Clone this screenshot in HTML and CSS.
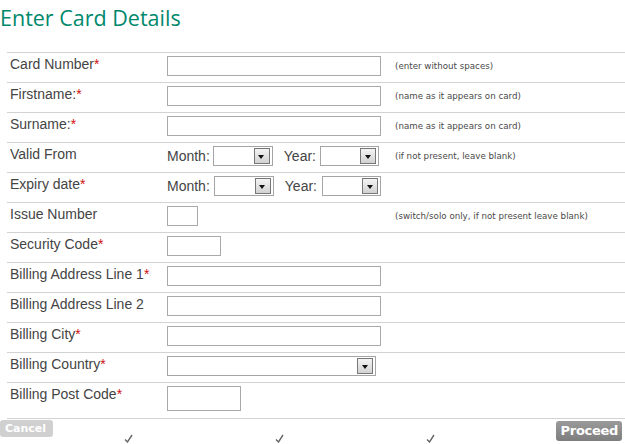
FILE: index.html
```html
<!DOCTYPE html>
<html>
<head>
<meta charset="utf-8">
<link rel="stylesheet" href="styles.css">
</head>
<body>
<h1 class="title">Enter Card Details</h1>
<table class="form">
  <tr>
    <td class="lbl">Card Number<span class="req">*</span></td>
    <td class="fld"><span class="inp w-long"></span></td>
    <td class="hint">(enter without spaces)</td>
  </tr>
  <tr>
    <td class="lbl">Firstname:<span class="req">*</span></td>
    <td class="fld"><span class="inp w-long"></span></td>
    <td class="hint">(name as it appears on card)</td>
  </tr>
  <tr>
    <td class="lbl">Surname:<span class="req">*</span></td>
    <td class="fld"><span class="inp w-long"></span></td>
    <td class="hint">(name as it appears on card)</td>
  </tr>
  <tr>
    <td class="lbl">Valid From</td>
    <td class="fld">
      <div class="dates">
        <span class="dl">Month:</span><span class="sel s-m"><span class="arr"></span></span>
        <span class="dl yr">Year:</span><span class="sel s-y"><span class="arr"></span></span>
      </div>
    </td>
    <td class="hint">(if not present, leave blank)</td>
  </tr>
  <tr>
    <td class="lbl">Expiry date<span class="req">*</span></td>
    <td class="fld">
      <div class="dates">
        <span class="dl">Month:</span><span class="sel s-m2"><span class="arr"></span></span>
        <span class="dl yr2">Year:</span><span class="sel s-y"><span class="arr"></span></span>
      </div>
    </td>
    <td class="hint"></td>
  </tr>
  <tr>
    <td class="lbl">Issue Number</td>
    <td class="fld"><span class="inp w-issue"></span></td>
    <td class="hint">(switch/solo only, if not present leave blank)</td>
  </tr>
  <tr>
    <td class="lbl">Security Code<span class="req">*</span></td>
    <td class="fld"><span class="inp w-sec"></span></td>
    <td class="hint"></td>
  </tr>
  <tr>
    <td class="lbl">Billing Address Line 1<span class="req">*</span></td>
    <td class="fld"><span class="inp w-long"></span></td>
    <td class="hint"></td>
  </tr>
  <tr>
    <td class="lbl">Billing Address Line 2</td>
    <td class="fld"><span class="inp w-long"></span></td>
    <td class="hint"></td>
  </tr>
  <tr>
    <td class="lbl">Billing City<span class="req">*</span></td>
    <td class="fld"><span class="inp w-long"></span></td>
    <td class="hint"></td>
  </tr>
  <tr>
    <td class="lbl">Billing Country<span class="req">*</span></td>
    <td class="fld"><span class="sel s-country"><span class="arr"></span></span></td>
    <td class="hint"></td>
  </tr>
  <tr class="last">
    <td class="lbl">Billing Post Code<span class="req">*</span></td>
    <td class="fld"><span class="inp w-post"></span></td>
    <td class="hint"></td>
  </tr>
</table>
<div class="footer">
  <span class="btn cancel">Cancel</span>
  <span class="btn proceed">Proceed</span>
</div>
<div class="ticks">
  <svg class="tick" width="9" height="9" viewBox="0 0 9 9"><path d="M1 5.5 L3.5 8 L8 1" fill="none" stroke="#666" stroke-width="1.4"/></svg>
  <svg class="tick" width="9" height="9" viewBox="0 0 9 9"><path d="M1 5.5 L3.5 8 L8 1" fill="none" stroke="#666" stroke-width="1.4"/></svg>
  <svg class="tick" width="9" height="9" viewBox="0 0 9 9"><path d="M1 5.5 L3.5 8 L8 1" fill="none" stroke="#666" stroke-width="1.4"/></svg>
</div>
</body>
</html>
```

FILE: styles.css
```css
html, body {
  margin: 0;
  padding: 0;
  background: #fff;
  overflow: hidden;
}
body {
  font-family: "Liberation Sans", Arial, sans-serif;
  color: #444;
  width: 625px;
  height: 444px;
}
.title {
  margin: 0;
  padding: 4px 0 0 0;
  height: 52px;
  box-sizing: border-box;
  font-family: "Open Sans", "DejaVu Sans", sans-serif;
  font-weight: normal;
  font-size: 21.5px;
  line-height: 28px;
  color: #00886c;
  white-space: nowrap;
}
.form {
  margin-left: 7px;
  width: 640px;
  border-collapse: collapse;
  table-layout: fixed;
}
.form tr {
  height: 30px;
}
.form tr.last {
  height: 36px;
}
.form td {
  border-top: 1px solid #d2d2d2;
  padding: 0;
  vertical-align: top;
  box-sizing: border-box;
}
.form tr.last td {
  border-bottom: 1px solid #d2d2d2;
}
.lbl {
  width: 160px;
  padding-left: 3px !important;
  padding-top: 3px !important;
  font-size: 14px;
  line-height: 17px;
  white-space: nowrap;
}
.req {
  color: #d01010;
}
.fld {
  width: 228px;
  padding-top: 3px !important;
}
.hint {
  font-family: "DejaVu Sans", Verdana, sans-serif;
  font-size: 8.7px;
  line-height: 10px;
  padding-top: 8px !important;
  white-space: nowrap;
  color: #4a4a4a;
}
.inp {
  display: block;
  height: 20px;
  border: 1px solid #a9a9a9;
  box-sizing: border-box;
  background: #fff;
}
.w-long { width: 214px; }
.w-issue { width: 31px; }
.w-sec { width: 54px; }
.w-post { width: 74px; height: 25px; }
.dates {
  display: flex;
  align-items: center;
  height: 20px;
}
.dl {
  font-size: 14px;
  line-height: 17px;
  margin-right: 3px;
}
.dl.yr {
  margin-left: 11px;
  margin-right: 4px;
}
.dl.yr2 {
  margin-left: 11px;
  margin-right: 5px;
}
.sel {
  display: flex;
  justify-content: flex-end;
  align-items: center;
  height: 20px;
  box-sizing: border-box;
  border: 1px solid #a5a5a5;
  padding-right: 2px;
  background: #fff;
}
.s-m { width: 60px; }
.s-m2 { width: 60px; margin-left: 1px; }
.s-y { width: 59px; }
.s-country { width: 209px; }
.arr {
  position: relative;
  width: 16px;
  height: 16px;
  box-sizing: border-box;
  border: 1px solid #777;
  background: linear-gradient(#f4f4f4, #d2d2d2);
}
.arr::after {
  content: "";
  position: absolute;
  left: 3.5px;
  top: 5.5px;
  border-left: 3.5px solid transparent;
  border-right: 3.5px solid transparent;
  border-top: 4px solid #111;
}
.footer {
  display: flex;
  justify-content: space-between;
  align-items: flex-start;
  padding: 1px 3px 0 0;
  height: 21px;
}
.btn {
  display: inline-block;
  color: #fff;
  font-family: "DejaVu Sans", "Lucida Grande", sans-serif;
  font-weight: bold;
  border-radius: 3px;
  white-space: nowrap;
}
.cancel {
  background: #d0d0d0;
  font-size: 11px;
  line-height: 17px;
  padding: 0 7px 0 5px;
}
.proceed {
  background: linear-gradient(#9a9a9a, #7e7e7e);
  font-size: 13px;
  line-height: 20px;
  padding: 0 4px 0 5px;
  margin-top: 1px;
  letter-spacing: -0.3px;
}
.ticks {
  display: flex;
  gap: 142px;
  padding-left: 124px;
  margin-top: -7px;
}
.tick {
  display: block;
}
```
